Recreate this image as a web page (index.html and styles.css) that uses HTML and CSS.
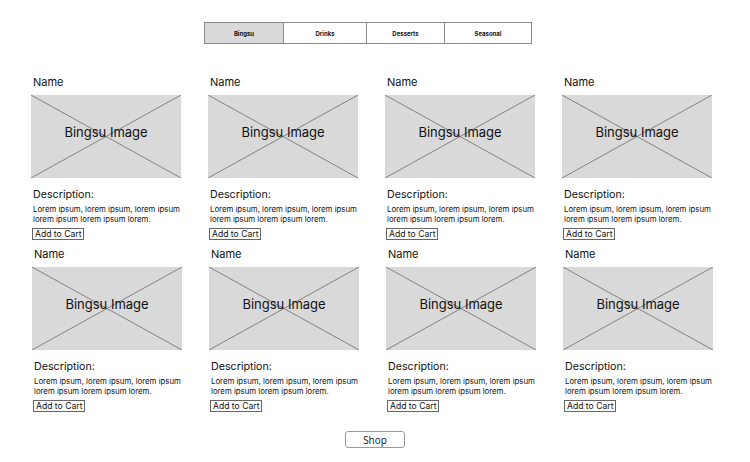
FILE: index.html
```html
<!DOCTYPE html>
<html lang="en">
<head>
<meta charset="UTF-8">
<title>Bingsu Menu</title>
<link rel="stylesheet" href="styles.css">
</head>
<body>

<nav class="tabs">
  <div class="tab active t1">Bingsu</div>
  <div class="tab t2">Drinks</div>
  <div class="tab t3">Desserts</div>
  <div class="tab t4">Seasonal</div>
</nav>

<div class="menu">
  <div class="row">
    <div class="card">
      <div class="name">Name</div>
      <div class="pic"><svg viewBox="0 0 150 83" preserveAspectRatio="none"><line x1="0" y1="0" x2="150" y2="83"/><line x1="150" y1="0" x2="0" y2="83"/></svg><span>Bingsu Image</span></div>
      <div class="desc">Description:</div>
      <p>Lorem ipsum, lorem ipsum, lorem ipsum<br>lorem ipsum lorem ipsum lorem.</p>
      <button class="add">Add to Cart</button>
    </div>
    <div class="card">
      <div class="name">Name</div>
      <div class="pic"><svg viewBox="0 0 150 83" preserveAspectRatio="none"><line x1="0" y1="0" x2="150" y2="83"/><line x1="150" y1="0" x2="0" y2="83"/></svg><span>Bingsu Image</span></div>
      <div class="desc">Description:</div>
      <p>Lorem ipsum, lorem ipsum, lorem ipsum<br>lorem ipsum lorem ipsum lorem.</p>
      <button class="add">Add to Cart</button>
    </div>
    <div class="card">
      <div class="name">Name</div>
      <div class="pic"><svg viewBox="0 0 150 83" preserveAspectRatio="none"><line x1="0" y1="0" x2="150" y2="83"/><line x1="150" y1="0" x2="0" y2="83"/></svg><span>Bingsu Image</span></div>
      <div class="desc">Description:</div>
      <p>Lorem ipsum, lorem ipsum, lorem ipsum<br>lorem ipsum lorem ipsum lorem.</p>
      <button class="add">Add to Cart</button>
    </div>
    <div class="card">
      <div class="name">Name</div>
      <div class="pic"><svg viewBox="0 0 150 83" preserveAspectRatio="none"><line x1="0" y1="0" x2="150" y2="83"/><line x1="150" y1="0" x2="0" y2="83"/></svg><span>Bingsu Image</span></div>
      <div class="desc">Description:</div>
      <p>Lorem ipsum, lorem ipsum, lorem ipsum<br>lorem ipsum lorem ipsum lorem.</p>
      <button class="add">Add to Cart</button>
    </div>
  </div>

  <div class="row second">
    <div class="card">
      <div class="name">Name</div>
      <div class="pic"><svg viewBox="0 0 150 83" preserveAspectRatio="none"><line x1="0" y1="0" x2="150" y2="83"/><line x1="150" y1="0" x2="0" y2="83"/></svg><span>Bingsu Image</span></div>
      <div class="desc">Description:</div>
      <p>Lorem ipsum, lorem ipsum, lorem ipsum<br>lorem ipsum lorem ipsum lorem.</p>
      <button class="add">Add to Cart</button>
    </div>
    <div class="card">
      <div class="name">Name</div>
      <div class="pic"><svg viewBox="0 0 150 83" preserveAspectRatio="none"><line x1="0" y1="0" x2="150" y2="83"/><line x1="150" y1="0" x2="0" y2="83"/></svg><span>Bingsu Image</span></div>
      <div class="desc">Description:</div>
      <p>Lorem ipsum, lorem ipsum, lorem ipsum<br>lorem ipsum lorem ipsum lorem.</p>
      <button class="add">Add to Cart</button>
    </div>
    <div class="card">
      <div class="name">Name</div>
      <div class="pic"><svg viewBox="0 0 150 83" preserveAspectRatio="none"><line x1="0" y1="0" x2="150" y2="83"/><line x1="150" y1="0" x2="0" y2="83"/></svg><span>Bingsu Image</span></div>
      <div class="desc">Description:</div>
      <p>Lorem ipsum, lorem ipsum, lorem ipsum<br>lorem ipsum lorem ipsum lorem.</p>
      <button class="add">Add to Cart</button>
    </div>
    <div class="card">
      <div class="name">Name</div>
      <div class="pic"><svg viewBox="0 0 150 83" preserveAspectRatio="none"><line x1="0" y1="0" x2="150" y2="83"/><line x1="150" y1="0" x2="0" y2="83"/></svg><span>Bingsu Image</span></div>
      <div class="desc">Description:</div>
      <p>Lorem ipsum, lorem ipsum, lorem ipsum<br>lorem ipsum lorem ipsum lorem.</p>
      <button class="add">Add to Cart</button>
    </div>
  </div>
</div>

<div class="footer">
  <button class="shop">Shop</button>
</div>

</body>
</html>
```

FILE: styles.css
```css
body {
  font-family: Inter, "Noto Sans", sans-serif;
  margin: 0;
  padding: 0;
  background: #fff;
  color: #111;
  width: 750px;
  height: 462px;
  overflow: hidden;
}
.tabs {
  display: flex;
  margin: 22px 0 0 204px;
  width: 328px;
  height: 22px;
  border: 1px solid #8a8a8a;
  box-sizing: border-box;
}
.tab {
  display: flex;
  align-items: center;
  justify-content: center;
  font-size: 6px;
  font-weight: 700;
  border-right: 1px solid #8a8a8a;
  box-sizing: border-box;
}
.tab:last-child {
  border-right: none;
}
.t1 { width: 79px; }
.t2 { width: 83px; }
.t3 { width: 78px; }
.t4 { flex: 1; }
.tab.active {
  background: #d9d9d9;
}
.menu {
  margin-top: 30px;
}
.row {
  display: grid;
  grid-template-columns: repeat(4, 150px);
  column-gap: 27px;
  padding-left: 31px;
  height: 172px;
}
.row.second {
  padding-left: 32px;
}
.card {
  display: flex;
  flex-direction: column;
  align-items: flex-start;
}
.name {
  font-size: 11px;
  line-height: 15px;
  margin: 1px 0 0 2px;
}
.pic {
  position: relative;
  width: 150px;
  height: 83px;
  margin-top: 5px;
  background: #d9d9d9;
  display: flex;
  align-items: center;
  justify-content: center;
}
.pic svg {
  position: absolute;
  left: 0;
  top: 0;
  width: 100%;
  height: 100%;
}
.pic line {
  stroke: #6b6b6b;
  stroke-width: 0.8;
}
.pic span {
  position: relative;
  font-size: 13px;
  margin-top: -10px;
}
.desc {
  font-size: 10.7px;
  line-height: 14px;
  margin: 10px 0 0 2px;
}
.card p {
  font-size: 7.8px;
  line-height: 9.5px;
  margin: 3px 0 0 2px;
  white-space: nowrap;
}
.add {
  font-family: Inter, "Noto Sans", sans-serif;
  font-size: 8.6px;
  line-height: 10px;
  padding: 0 2px;
  margin: 4px 0 0 1px;
  background: #fff;
  border: 1px solid #666;
  border-radius: 0;
  color: #111;
}
.footer {
  display: flex;
  justify-content: center;
  margin-top: 13px;
}
.shop {
  width: 60px;
  height: 17px;
  font-family: "Open Sans", sans-serif;
  font-size: 10px;
  font-weight: 500;
  background: #fff;
  border: 1px solid #9a9a9a;
  border-radius: 3px;
  padding: 0;
  color: #111;
}
```
